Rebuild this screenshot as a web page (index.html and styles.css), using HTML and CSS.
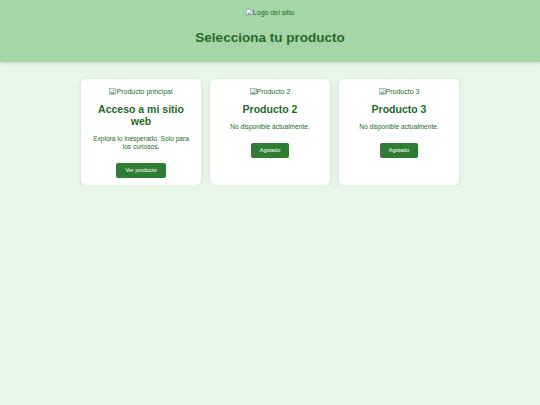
FILE: index.html
```html
<!DOCTYPE html>
<html lang="es">

<head>
    <meta charset="UTF-8">
    <meta name="viewport" content="width=device-width, initial-scale=1.0">
    <title>Selecciona tu producto</title>
    <link rel="stylesheet" href="styles.css">
</head>

<body>
    <header class="cabecera">
        <div class="logo">
            <svg class="roto" viewBox="0 0 8 8" width="7" height="7">
                <rect x="0.5" y="0.5" width="7" height="7" fill="#eef3f6" stroke="#9aa7b0" stroke-width="0.8"/>
                <path d="M1 6.5 L3 4 L4.5 5.5 L5.5 4.5 L7 6.5 Z" fill="#6aa36a"/>
                <circle cx="5.5" cy="2.5" r="0.9" fill="#7fb0d8"/>
            </svg>Logo del sitio
        </div>
        <h1>Selecciona tu producto</h1>
    </header>

    <main class="productos">
        <div class="tarjeta">
            <div class="imagen">
                <svg class="roto" viewBox="0 0 8 8" width="7" height="7">
                    <rect x="0.5" y="0.5" width="7" height="7" fill="#eef3f6" stroke="#9aa7b0" stroke-width="0.8"/>
                    <path d="M1 6.5 L3 4 L4.5 5.5 L5.5 4.5 L7 6.5 Z" fill="#6aa36a"/>
                    <circle cx="5.5" cy="2.5" r="0.9" fill="#7fb0d8"/>
                </svg>Producto principal
            </div>
            <h2>Acceso a mi sitio web</h2>
            <p>Explora lo inesperado. Solo para los curiosos.</p>
            <button class="boton">Ver producto</button>
        </div>

        <div class="tarjeta">
            <div class="imagen">
                <svg class="roto" viewBox="0 0 8 8" width="7" height="7">
                    <rect x="0.5" y="0.5" width="7" height="7" fill="#eef3f6" stroke="#9aa7b0" stroke-width="0.8"/>
                    <path d="M1 6.5 L3 4 L4.5 5.5 L5.5 4.5 L7 6.5 Z" fill="#6aa36a"/>
                    <circle cx="5.5" cy="2.5" r="0.9" fill="#7fb0d8"/>
                </svg>Producto 2
            </div>
            <h2>Producto 2</h2>
            <p>No disponible actualmente.</p>
            <button class="boton">Agotado</button>
        </div>

        <div class="tarjeta">
            <div class="imagen">
                <svg class="roto" viewBox="0 0 8 8" width="7" height="7">
                    <rect x="0.5" y="0.5" width="7" height="7" fill="#eef3f6" stroke="#9aa7b0" stroke-width="0.8"/>
                    <path d="M1 6.5 L3 4 L4.5 5.5 L5.5 4.5 L7 6.5 Z" fill="#6aa36a"/>
                    <circle cx="5.5" cy="2.5" r="0.9" fill="#7fb0d8"/>
                </svg>Producto 3
            </div>
            <h2>Producto 3</h2>
            <p>No disponible actualmente.</p>
            <button class="boton">Agotado</button>
        </div>
    </main>
</body>

</html>
```

FILE: styles.css
```css
body {
    font-family: "Liberation Sans", Arial, sans-serif;
    background-color: #e8f5e9;
    color: #236a27;
    margin: 0;
    padding: 0;
}

.cabecera {
    background-color: #a5d6a7;
    text-align: center;
    padding: 8px 0 16px;
    box-shadow: 0 1px 4px rgba(0, 0, 0, 0.12);
}

.logo,
.imagen {
    font-size: 7px;
    line-height: 9px;
    color: #236a27;
}

.roto {
    vertical-align: -1px;
}

.cabecera h1 {
    font-size: 13.5px;
    line-height: 17px;
    margin: 12px 0 0;
    color: #236a27;
}

.productos {
    display: flex;
    justify-content: center;
    align-items: flex-start;
    gap: 9px;
    margin-top: 17px;
}

.tarjeta {
    width: 120px;
    box-sizing: border-box;
    background-color: #fff;
    border-radius: 5px;
    box-shadow: 0 1px 4px rgba(0, 0, 0, 0.1);
    padding: 8px 8px;
    text-align: center;
    height: 106px;
}

.tarjeta h2 {
    font-size: 10.5px;
    line-height: 12px;
    margin: 7px 0 0;
    color: #236a27;
}

.tarjeta p {
    font-size: 6.6px;
    line-height: 8px;
    margin: 8px 0 12px;
    color: #236a27;
}

.boton {
    display: block;
    margin: 0 auto;
    background-color: #2e7d32;
    color: white;
    font-family: "Liberation Sans", Arial, sans-serif;
    font-size: 5.5px;
    line-height: 7px;
    padding: 4px 9px;
    border: none;
    border-radius: 2px;
    cursor: pointer;
}
```
